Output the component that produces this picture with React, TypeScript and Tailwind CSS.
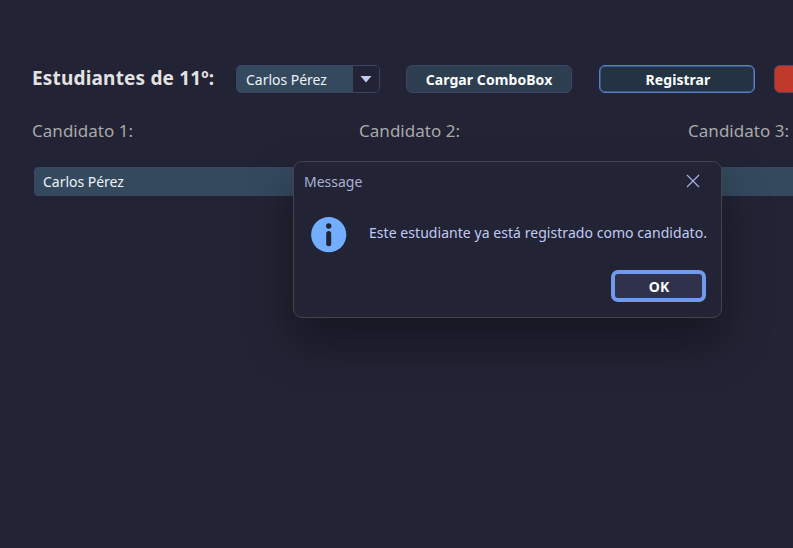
import React from "react";

const uiFont = "font-['Noto_Sans','Open_Sans',sans-serif]";

function Toolbar() {
  return (
    <div className="flex h-7 items-center">
      <h1 className="w-[204px] shrink-0 pb-[2px] whitespace-pre text-[19px] leading-[26px] font-bold tracking-[0.18px] text-[#e2e2e2]">
        Estudiantes de 11º:
      </h1>
      <div className="flex h-7 w-36 shrink-0 overflow-hidden rounded-[5px] border border-[#3e4265] bg-[#34495e]">
        <span className="flex-1 pl-[9px] text-[14px] leading-[27px] tracking-[-0.02px] whitespace-nowrap text-[#eef2f5]">
          Carlos Pérez
        </span>
        <span className="flex w-[26px] items-center justify-center bg-[#222334]">
          <svg width="12" height="7" viewBox="0 0 12 7">
            <path d="M.5 0h11L6 6.5z" fill="#c0caf5" />
          </svg>
        </span>
      </div>
      <button className="ml-[26px] h-7 w-[166px] shrink-0 rounded-[6px] border border-[#3e4265] bg-[#2c3e50] text-[14px] font-bold tracking-[0.08px] text-white">
        Cargar ComboBox
      </button>
      <button className="ml-[27px] h-7 w-[156px] shrink-0 rounded-[6px] border border-[#587fca] bg-[#243342] pl-[2px] text-[14px] font-bold tracking-[0.05px] text-white shadow-[inset_0_0_0_0.5px_#587fca]">
        Registrar
      </button>
      <button className="ml-[19px] h-7 w-40 shrink-0 rounded-[6px] border border-[#63415e] bg-[#c0392b]" />
    </div>
  );
}

function CandidateLabels() {
  return (
    <div className="mt-[24px] flex text-[17px] leading-7 whitespace-nowrap text-[#a9a9a9]">
      <span className="w-[327px] shrink-0 tracking-[0.03px]">Candidato 1:</span>
      <span className="w-[329px] shrink-0 tracking-[0.03px]">Candidato 2:</span>
      <span className="shrink-0 tracking-[0.03px]">Candidato 3:</span>
    </div>
  );
}

function MessageDialog() {
  return (
    <section
      role="dialog"
      className="absolute top-[161px] left-[293px] h-[157px] w-[429px] rounded-[9px] border border-[#42434e] bg-[#222334] shadow-[0_24px_48px_rgba(0,0,0,0.36)]"
    >
      <header className="flex h-[38px] items-center justify-between pr-[21px] pl-[10px]">
        <span className="pt-px text-[14px] text-[#a9b1d6]">Message</span>
        <svg width="14" height="14" viewBox="0 0 14 14" fill="none" stroke="#a9b1e6" strokeWidth="1.15">
          <path d="M1 1l12 12M13 1L1 13" />
        </svg>
      </header>
      <div className="mt-px flex h-[69px] pt-4 pl-[17px]">
        <svg width="36" height="36" viewBox="0 0 36 36" className="shrink-0">
          <circle cx="17.7" cy="17.7" r="17.6" fill="#73adff" />
          <circle cx="17.7" cy="9" r="2.7" fill="#222334" />
          <rect x="15.2" y="14" width="5" height="15.3" rx="2.5" fill="#222334" />
        </svg>
        <p className="ml-[22px] text-[14px] leading-8 tracking-[0.05px] whitespace-nowrap text-[#c0caf5]">
          Este estudiante ya está registrado como candidato.
        </p>
      </div>
      <div className="flex justify-end pr-[15px]">
        <button className="h-8 w-[95px] rounded-[7px] border-4 border-[#7199ee] bg-[#30314b] pt-px pl-px text-[14px] leading-[24px] font-bold text-white">
          OK
        </button>
      </div>
    </section>
  );
}

export default function App() {
  return (
    <main className={`relative h-[548px] w-[793px] overflow-hidden bg-[#222334] pt-[65px] pl-8 ${uiFont}`}>
      <Toolbar />
      <CandidateLabels />
      <div className="mt-[22px] ml-[2px] h-[29px] w-[980px] rounded-[4px] border border-[#3e4265] bg-[#34495e] pl-2 text-[14px] leading-[27px] tracking-[-0.02px] text-[#eef2f5]">
        Carlos Pérez
      </div>
      <MessageDialog />
    </main>
  );
}
